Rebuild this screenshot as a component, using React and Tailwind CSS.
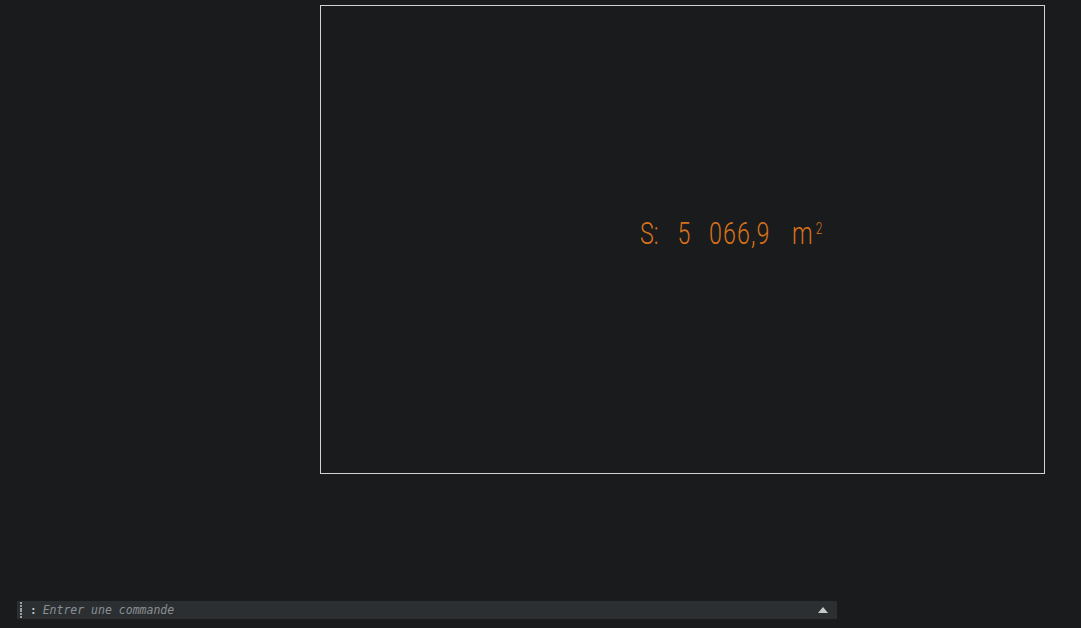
import { useState } from "react";

function CommandLine() {
  let [value, setValue] = useState("");
  return (
    <div className="ml-[17px] mb-[9px] w-[820px] h-[18px] bg-[#2b2f31] flex items-center">
      <div className="ml-[3px] w-[2px] h-[16px] flex flex-col justify-between">
        {[0, 1, 2, 3, 4, 5].map((i) => (
          <span key={i} className="block w-[2px] h-[2px] bg-[#9aa0a4]" />
        ))}
      </div>
      <span className="ml-[8px] text-[11px] leading-none text-[#b8c4cc] font-['DejaVu_Sans_Mono',monospace] font-bold">
        :
      </span>
      <input
        type="text"
        value={value}
        onChange={(e) => setValue(e.target.value)}
        placeholder="Entrer une commande"
        className="ml-[6px] pt-[1px] flex-1 bg-transparent outline-none border-none text-[11.5px] italic text-[#c0c4c8] placeholder:text-[#8a9096] font-['DejaVu_Sans_Mono',monospace]"
      />
      <svg width="10" height="6" viewBox="0 0 10 6" className="mr-[9px]">
        <path d="M5 0 L10 6 L0 6 Z" fill="#c8c8c8" />
      </svg>
    </div>
  );
}

function AreaLabel() {
  // texte de cote : police étroite, on compresse Roboto horizontalement
  return (
    <div className="absolute left-[319px] top-[212px] origin-left scale-x-[0.75] flex items-start text-[31px] leading-none text-[#d8721a] font-['Roboto',sans-serif] font-light whitespace-nowrap">
      <span>S:</span>
      <span className="ml-[25px]">5</span>
      <span className="ml-[25px] tracking-[1.4px]">066,9</span>
      <span className="ml-[29px]">m</span>
      <span className="ml-[4px] mt-[3px] text-[16px]">2</span>
    </div>
  );
}

export default function App() {
  return (
    <div className="w-[1081px] h-[628px] bg-[#1a1b1d] flex flex-col overflow-hidden">
      <div className="pl-[320px] pt-[5px]">
        <div className="relative w-[725px] h-[469px] border border-[#d2d2d2]">
          <AreaLabel />
        </div>
      </div>
      <div className="mt-auto">
        <CommandLine />
      </div>
    </div>
  );
}
